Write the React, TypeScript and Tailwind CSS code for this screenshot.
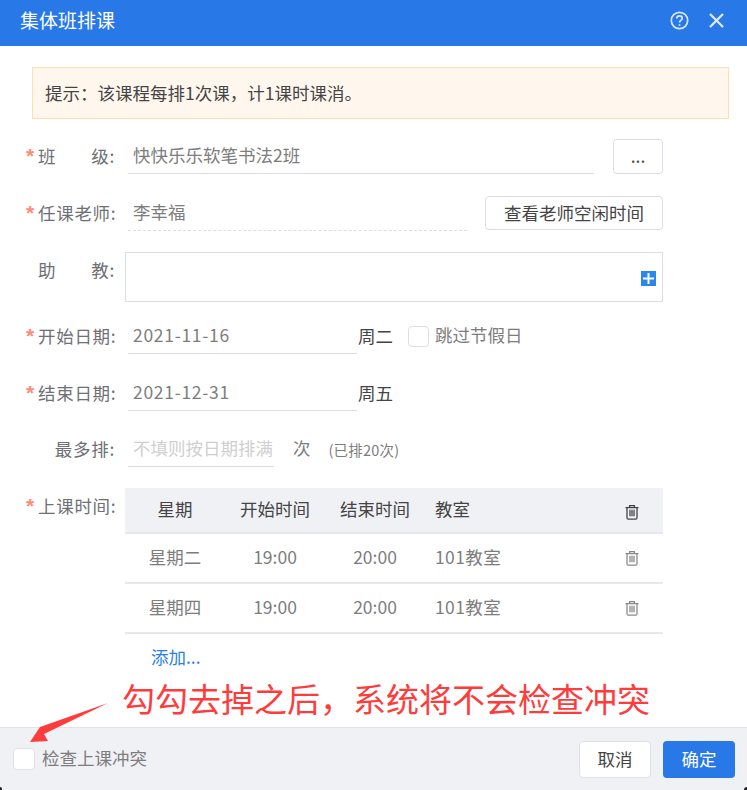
import React from 'react';

const cjk = '"Noto Sans CJK SC", "Liberation Sans", sans-serif';

function Label({
  required,
  spread,
  children,
}: {
  required?: boolean;
  spread?: [string, string];
  children?: React.ReactNode;
}) {
  return (
    <div className="flex w-[89px] shrink-0 pb-[2px] text-[17.5px] leading-[24px] tracking-[0.7px] text-[#6e7075]">
      <span className="w-[12px] shrink-0 font-['Liberation_Sans'] text-[21px] font-bold leading-[24px] tracking-normal text-[#ff8b76]">
        {required ? '*' : ''}
      </span>
      {spread ? (
        <span className="flex flex-1 justify-between">
          <span>{spread[0]}</span>
          <span>{spread[1]}</span>
        </span>
      ) : (
        <span className="flex-1 whitespace-nowrap text-right">{children}</span>
      )}
    </div>
  );
}

function Field({
  width,
  dashed,
  muted,
  date,
  children,
}: {
  width: string;
  dashed?: boolean;
  muted?: boolean;
  date?: boolean;
  children: React.ReactNode;
}) {
  return (
    <div
      className={`ml-[13px] flex h-[35px] shrink-0 items-center overflow-hidden whitespace-nowrap border-b pb-[2px] pl-[5px] text-[17.5px] ${width} ${
        dashed ? 'border-dashed border-[#dcdde6]' : 'border-[#dcdde6]'
      } ${muted ? 'text-[#cfcfcf]' : 'text-[#7d7d7d]'} ${date ? 'tracking-[0.7px]' : ''}`}
    >
      {children}
    </div>
  );
}

function Trash({ color }: { color: string }) {
  return (
    <svg width="16" height="16" viewBox="0 0 16 16" fill="none" stroke={color} strokeWidth="1.3">
      <path d="M1.5 3.6h13" />
      <path d="M5.6 3.4V1.6h4.8v1.8" />
      <path d="M3 3.6v10.2c0 .8.5 1.3 1.3 1.3h7.4c.8 0 1.3-.5 1.3-1.3V3.6" />
      <path d="M6 5.8v6.4M8 5.8v6.4M10 5.8v6.4" />
    </svg>
  );
}

function TableRow({ day, start, end, room }: { day: string; start: string; end: string; room: string }) {
  return (
    <div className="grid h-[50px] grid-cols-[100px_100px_100px_1fr_62px] items-center border-b-2 border-[#e6e8ee] text-[17.5px] text-[#7d7d7d]">
      <div className="pb-[2px] text-center">{day}</div>
      <div className="pb-[2px] text-center">{start}</div>
      <div className="pb-[2px] text-center">{end}</div>
      <div className="pb-[2px] pl-[10px] tracking-[0.4px]">{room}</div>
      <div className="flex justify-center">
        <Trash color="#8a8a8a" />
      </div>
    </div>
  );
}

export default function App() {
  return (
    <div
      className="relative flex h-[790px] w-[747px] flex-col overflow-hidden bg-white"
      style={{ fontFamily: cjk }}
    >
      <header className="flex h-[46px] shrink-0 items-center justify-between bg-[#2878e8] pb-[6px] pl-[20px] pr-[23px] text-white">
        <span className="text-[19px]">集体班排课</span>
        <div className="flex items-center gap-[20px]">
          <svg width="19" height="19" viewBox="0 0 19 19" fill="none" stroke="#dbe8fb" strokeWidth="1.7">
            <circle cx="9.5" cy="9.5" r="8.2" />
            <path d="M6.8 7.4c0-1.6 1.2-2.6 2.7-2.6s2.7 1 2.7 2.4c0 2.2-2.7 2.2-2.7 4.2" />
            <path d="M9.5 13.2v1.6" />
          </svg>
          <svg width="15" height="15" viewBox="0 0 15 15" fill="none" stroke="#dbe8fb" strokeWidth="2.4">
            <path d="M1 1l13 13M14 1L1 14" />
          </svg>
        </div>
      </header>

      <div className="ml-[32px] mt-[21px] flex h-[52px] w-[697px] shrink-0 items-center border border-[#fde0b0] bg-[#fff7ee] pl-[12px] text-[17.5px] text-[#444]">
        提示：该课程每排1次课，计1课时课消。
      </div>

      <div className="ml-[26px] mt-[20px] flex h-[35px] items-center">
        <Label required spread={['班', '级:']} />
        <Field width="w-[466px]">快快乐乐软笔书法2班</Field>
        <button className="ml-[19px] h-[35px] w-[50px] rounded-[4px] border border-[#dcdde6] bg-white text-[17.5px] text-[#444]">
          ...
        </button>
      </div>

      <div className="ml-[26px] mt-[22px] flex h-[35px] items-center">
        <Label required>任课老师:</Label>
        <Field width="w-[339px]" dashed>
          李幸福
        </Field>
        <button className="ml-[18px] h-[34px] w-[178px] self-start rounded-[4px] border border-[#dcdde6] bg-white text-[17.5px] text-[#444]">
          查看老师空闲时间
        </button>
      </div>

      <div className="ml-[26px] mt-[21px] flex h-[50px] items-start">
        <div className="pt-[6px]">
          <Label spread={['助', '教:']} />
        </div>
        <div className="relative ml-[10px] h-[50px] w-[538px] border border-[#dcdde6]">
          <div className="absolute right-[6px] top-[18px] flex h-[15px] w-[15px] items-center justify-center bg-[#2b86f0]">
            <svg width="15" height="15" viewBox="0 0 15 15" stroke="white" strokeWidth="2">
              <path d="M7.5 2v11M2 7.5h11" />
            </svg>
          </div>
        </div>
      </div>

      <div className="ml-[26px] mt-[17px] flex h-[35px] items-center">
        <Label required>开始日期:</Label>
        <Field width="w-[229px]" date>
          2021-11-16
        </Field>
        <span className="ml-[1px] w-[35px] text-[17.5px] text-[#444]">周二</span>
        <span className="ml-[15px] h-[21px] w-[21px] rounded-[4px] border border-[#dcdde6] bg-white" />
        <span className="ml-[6px] pb-[2px] text-[17.5px] text-[#7d7d7d]">跳过节假日</span>
      </div>

      <div className="ml-[26px] mt-[22px] flex h-[35px] items-center">
        <Label required>结束日期:</Label>
        <Field width="w-[229px]" date>
          2021-12-31
        </Field>
        <span className="ml-[1px] text-[17.5px] text-[#444]">周五</span>
      </div>

      <div className="ml-[26px] mt-[21px] flex h-[35px] items-center">
        <Label>最多排:</Label>
        <Field width="w-[146px]" muted>
          不填则按日期排满
        </Field>
        <span className="ml-[19px] pb-[2px] text-[17.5px] text-[#7d7d7d]">次</span>
        <span className="ml-[18px] text-[14.5px] tracking-[0.2px] text-[#7d7d7d]">(已排20次)</span>
      </div>

      <div className="ml-[26px] mt-[21px] flex items-start">
        <div className="pt-[6px]">
          <Label required>上课时间:</Label>
        </div>
        <div className="ml-[10px] w-[538px]">
          <div className="grid h-[46px] grid-cols-[100px_100px_100px_1fr_62px] items-center border-b-2 border-[#e6e8ee] bg-[#f0f1f5] text-[17.5px] text-[#444]">
            <div className="pb-[2px] text-center">星期</div>
            <div className="pb-[2px] text-center">开始时间</div>
            <div className="pb-[2px] text-center">结束时间</div>
            <div className="pb-[2px] pl-[10px]">教室</div>
            <div className="flex justify-center pt-[3px]">
              <Trash color="#444" />
            </div>
          </div>
          <TableRow day="星期二" start="19:00" end="20:00" room="101教室" />
          <TableRow day="星期四" start="19:00" end="20:00" room="101教室" />
          <div className="mt-[11px] pl-[26px] text-[17.5px] leading-[24px] text-[#2b7fe8]">添加...</div>
        </div>
      </div>

      <footer className="mt-auto flex h-[63px] shrink-0 items-center justify-between border-t border-[#e2e3e8] bg-[#f0f1f5] pl-[13px] pr-[12px]">
        <div className="flex items-center">
          <span className="h-[22px] w-[22px] rounded-[4px] border border-[#dfe0e8] bg-white" />
          <span className="ml-[7px] pb-[2px] text-[17.5px] text-[#7d7d7d]">检查上课冲突</span>
        </div>
        <div className="flex items-center gap-[12px]">
          <button className="h-[37px] w-[72px] rounded-[4px] border border-[#dfe0e8] bg-white text-[17.5px] text-[#444]">
            取消
          </button>
          <button className="h-[37px] w-[72px] rounded-[4px] bg-[#2878e8] text-[17.5px] text-white">确定</button>
        </div>
      </footer>

      {/* annotation drawn over the dialog */}
      <div className="absolute left-[122px] top-[675px] whitespace-nowrap text-[33px] leading-[46px] text-[#ff3b3b]">
        勾勾去掉之后，系统将不会检查冲突
      </div>
      <svg className="absolute left-0 top-[695px]" width="120" height="55" viewBox="0 0 120 55">
        <polygon points="108,8 40,32 30,47 48,46 44,39" fill="#ff3b3b" />
      </svg>
      {/* window corners at the very bottom of the capture */}
      <div className="absolute bottom-0 left-0 h-[3px] w-[2px] rounded-tr-[3px] bg-[#222]" />
      <div className="absolute bottom-0 right-0 h-[3px] w-[3px] rounded-tl-[3px] bg-[#222]" />
    </div>
  );
}
